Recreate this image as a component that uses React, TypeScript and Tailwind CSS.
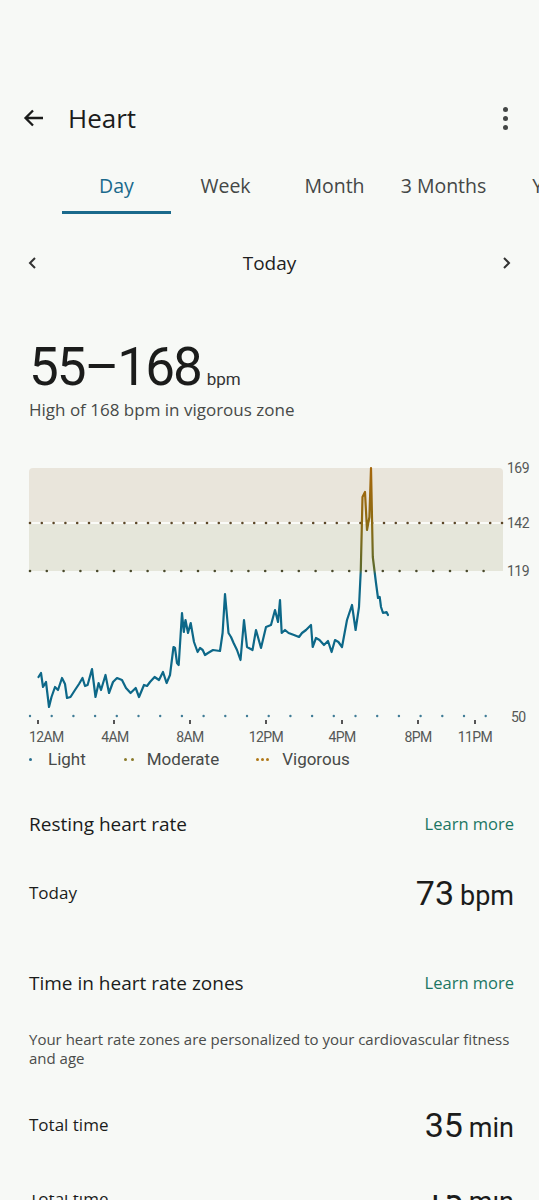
import React from "react";

// 하루 심박수 곡선 (x: 화면 px, y: 화면 px)
const POINTS: [number, number][] = [
  [38.5, 677], [41, 673], [43, 687], [46, 682], [49, 707], [51.5, 697], [55, 687], [58, 690],
  [62, 678], [65, 684], [67, 698], [70.5, 697], [75, 690], [79, 684], [82.5, 678], [85, 686],
  [87.6, 685], [92, 669], [95.5, 697], [98.6, 683], [101, 690], [105.5, 675], [109, 693],
  [113, 682], [117, 678], [122, 680], [126, 688], [130.6, 693], [135.7, 688], [139, 697],
  [144, 685], [147, 686], [150, 682], [154.6, 677], [159, 680], [163, 672], [166.6, 683],
  [170, 675], [173.5, 647], [175, 648], [177, 663], [178.7, 665], [182, 613], [183.8, 632],
  [185.5, 620], [188, 633], [190.7, 623], [194, 642], [197.6, 652], [200, 648], [202.7, 650],
  [205, 655], [208, 653], [213, 650], [220, 651], [222.6, 633], [225, 594], [228.5, 633],
  [231, 637], [233.6, 643], [237, 650], [240.5, 660], [244, 620], [247, 647], [252.5, 650],
  [256, 630], [261, 648], [266, 627], [271, 625], [275, 610], [278, 622], [280, 600],
  [281.7, 633], [285, 630], [288.6, 633], [294, 635], [299, 637], [302, 633], [306, 630],
  [311, 625], [312.7, 647], [316, 638], [319.5, 640], [324, 645], [328, 641], [331.6, 652],
  [335, 640], [338.4, 642], [342, 647], [347, 620], [352, 605], [355.6, 630], [359, 607],
  [360.8, 570], [362.5, 497], [365, 492], [367, 530], [369.4, 517], [371, 468], [372.8, 557],
  [376, 583], [378, 598], [379.7, 597], [381, 607], [383, 613], [386.5, 612], [388, 615],
];

const OFFSET = 455;

const linePath = POINTS.map(
  ([x, y], i) => `${i === 0 ? "M" : "L"}${x} ${y - OFFSET}`,
).join(" ");

/** x축 시간 라벨 */
const X_LABELS = [
  { label: "12AM", x: 38, anchor: "start", lx: 29 },
  { label: "4AM", x: 114, anchor: "middle", lx: 115 },
  { label: "8AM", x: 190, anchor: "middle", lx: 190 },
  { label: "12PM", x: 266, anchor: "middle", lx: 266 },
  { label: "4PM", x: 342, anchor: "middle", lx: 342 },
  { label: "8PM", x: 418, anchor: "middle", lx: 418 },
  { label: "11PM", x: 475, anchor: "middle", lx: 475 },
] as const;

const range = (from: number, to: number, step: number) => {
  const out: number[] = [];
  for (let v = from; v <= to + 0.01; v += step) out.push(v);
  return out;
};

function HeartChart() {
  return (
    <svg width="539" height="295" viewBox="0 0 539 295" className="block font-['Roboto',sans-serif]">
      <defs>
        <linearGradient id="zoneLine" gradientUnits="userSpaceOnUse" x1="0" y1="13" x2="0" y2="261">
          <stop offset="0" stopColor="#a5670c" />
          <stop offset="0.22" stopColor="#8d6a12" />
          <stop offset="0.41" stopColor="#5c6a2c" />
          <stop offset="0.43" stopColor="#0d6888" />
          <stop offset="1" stopColor="#0d6888" />
        </linearGradient>
      </defs>

      {/* 존 배경 */}
      <path d="M29 17 Q29 13 33 13 L499 13 Q503 13 503 17 L503 68 L29 68 Z" fill="#e9e5db" />
      <rect x="29" y="68" width="474" height="48" fill="#e5e6da" />
      <line x1="29" y1="68" x2="503" y2="68" stroke="#fafaf7" strokeWidth="2" />

      {/* 경계 점선 */}
      {range(30, 502, 11.8).map((x) => (
        <circle key={`v${x}`} cx={x} cy={68} r={1.3} fill="#5b4526" />
      ))}
      {range(30, 500, 16.8).map((x) => (
        <circle key={`m${x}`} cx={x} cy={116} r={1.3} fill="#4a4a2c" />
      ))}
      {range(30, 486, 21.7).map((x) => (
        <circle key={`l${x}`} cx={x} cy={261} r={1.2} fill="#3f7c96" />
      ))}

      {/* x축 눈금 */}
      {X_LABELS.map((t) => (
        <rect key={t.label} x={t.x - 1} y={265} width={2} height={4} fill="#555" />
      ))}
      {X_LABELS.map((t) => (
        <text
          key={`t${t.label}`}
          x={t.lx}
          y={287}
          textAnchor={t.anchor}
          fontSize="14"
          letterSpacing="-0.6"
          fill="#555856"
        >
          {t.label}
        </text>
      ))}

      {/* y축 라벨 */}
      {[
        { v: "169", y: 13 },
        { v: "142", y: 68 },
        { v: "119", y: 116 },
        { v: "50", y: 262 },
      ].map((l) => (
        <text
          key={l.v}
          x={l.v === "50" ? 511 : 507}
          y={l.y + 5}
          fontSize="14"
          letterSpacing="-0.5"
          fill="#555856"
        >
          {l.v}
        </text>
      ))}

      {/* 심박수 곡선 */}
      <path
        d={linePath}
        fill="none"
        stroke="url(#zoneLine)"
        strokeWidth="2.2"
        strokeLinejoin="round"
        strokeLinecap="round"
      />
    </svg>
  );
}

const TABS = ["Day", "Week", "Month", "3 Months", "Year"];

function ValueRow({ label, value, unit }: { label: string; value: string; unit: string }) {
  return (
    <div className="flex h-[40px] items-center justify-between pl-[29px] pr-[25px]">
      <span className="text-[17px] leading-[20px]">{label}</span>
      <span className="flex items-baseline font-['Roboto',sans-serif]">
        <span className="text-[34px] leading-none">{value}</span>
        <span className="ml-[6px] text-[27px] leading-none">{unit}</span>
      </span>
    </div>
  );
}

function SectionHeader({ title }: { title: string }) {
  return (
    <div className="flex h-[24px] items-center justify-between pl-[29px] pr-[25px]">
      <h2 className="text-[19px] font-medium leading-[24px]">{title}</h2>
      <span className="text-[16.5px] font-medium text-[#1b7663]">Learn more</span>
    </div>
  );
}

export default function App() {
  return (
    <div className="h-[1200px] w-[539px] overflow-hidden bg-[#f7f9f6] font-['Open_Sans',sans-serif] text-[#1b1c1b]">
      <div className="h-[90px]" />

      {/* 헤더 */}
      <div className="flex h-[56px] items-center pl-[22px] pr-[31px]">
        <svg width="24" height="24" viewBox="0 0 24 24" className="shrink-0">
          <path d="M21 12H4M11 4.5L3.5 12 11 19.5" fill="none" stroke="#1b1c1b" strokeWidth="2.3" />
        </svg>
        <h1 className="ml-[22px] text-[26px] leading-none">Heart</h1>
        <div className="ml-auto flex flex-col items-center gap-[4px]">
          <span className="h-[5px] w-[5px] rounded-full bg-[#444746]" />
          <span className="h-[5px] w-[5px] rounded-full bg-[#444746]" />
          <span className="h-[5px] w-[5px] rounded-full bg-[#444746]" />
        </div>
      </div>

      {/* 기간 탭 */}
      <div className="mt-[14px] flex overflow-hidden pl-[62px]">
        {TABS.map((tab, i) => (
          <div key={tab} className="flex w-[109px] shrink-0 flex-col items-center">
            <span
              className={`flex h-[51px] items-center whitespace-nowrap text-[19.5px] ${
                i === 0 ? "font-medium text-[#1a6a8c]" : "text-[#444746]"
              }`}
            >
              {tab}
            </span>
            <span className={`h-[3px] w-full ${i === 0 ? "bg-[#1a6a8c]" : ""}`} />
          </div>
        ))}
      </div>

      {/* 날짜 이동 */}
      <div className="mt-[24px] flex h-[50px] items-center justify-between px-[26px]">
        <svg width="14" height="14" viewBox="0 0 14 14">
          <path d="M9 2L4 7l5 5" fill="none" stroke="#333" strokeWidth="2" />
        </svg>
        <span className="text-[19px] font-medium text-[#1f1f1f]">Today</span>
        <svg width="14" height="14" viewBox="0 0 14 14">
          <path d="M5 2l5 5-5 5" fill="none" stroke="#333" strokeWidth="2" />
        </svg>
      </div>

      {/* 요약 */}
      <div className="mt-[49px] flex h-[60px] items-baseline px-[29px] font-['Roboto',sans-serif] leading-[60px]">
        <span className="text-[53px] tracking-[-2px] text-[#1b1c1b]">55–168</span>
        <span className="ml-[6px] text-[17px] text-[#333]">bpm</span>
      </div>
      <p className="mt-[3px] px-[29px] text-[17px] leading-[20px] text-[#474a48]">
        High of 168 bpm in vigorous zone
      </p>

      {/* 차트 */}
      <div className="mt-[35px]">
        <HeartChart />
      </div>

      {/* 범례 */}
      <div className="-mt-[1px] flex h-[20px] items-center px-[29px] font-['Roboto',sans-serif] text-[17px] leading-[20px] text-[#474a48]">
        <span className="h-[3px] w-[3px] rounded-full bg-[#2a7090]" />
        <span className="ml-[16px]">Light</span>
        <span className="ml-[38px] flex items-center gap-[4px]">
          <span className="h-[3px] w-[3px] rounded-full bg-[#8a7a2a]" />
          <span className="h-[3px] w-[3px] rounded-full bg-[#8a7a2a]" />
        </span>
        <span className="ml-[13px]">Moderate</span>
        <span className="ml-[37px] flex items-center gap-[2px]">
          <span className="h-[3px] w-[3px] rounded-full bg-[#b07818]" />
          <span className="h-[3px] w-[3px] rounded-full bg-[#b07818]" />
          <span className="h-[3px] w-[3px] rounded-full bg-[#b07818]" />
        </span>
        <span className="ml-[13px]">Vigorous</span>
      </div>

      {/* 안정 시 심박수 */}
      <div className="mt-[43px]">
        <SectionHeader title="Resting heart rate" />
      </div>
      <div className="mt-[37px]">
        <ValueRow label="Today" value="73" unit="bpm" />
      </div>

      {/* 심박수 구간 */}
      <div className="mt-[58px]">
        <SectionHeader title="Time in heart rate zones" />
      </div>
      <p className="mt-[35px] pl-[29px] pr-[25px] text-[15px] leading-[19px] text-[#4a4c4a]">
        Your heart rate zones are personalized to your cardiovascular fitness and age
      </p>
      <div className="mt-[37px]">
        <ValueRow label="Total time" value="35" unit="min" />
      </div>

      {/* 잘린 다음 행 */}
      <div className="mt-[50px] h-[10px] overflow-hidden">
        <div className="-mt-[16px]">
          <ValueRow label="Total time" value="15" unit="min" />
        </div>
      </div>
    </div>
  );
}
